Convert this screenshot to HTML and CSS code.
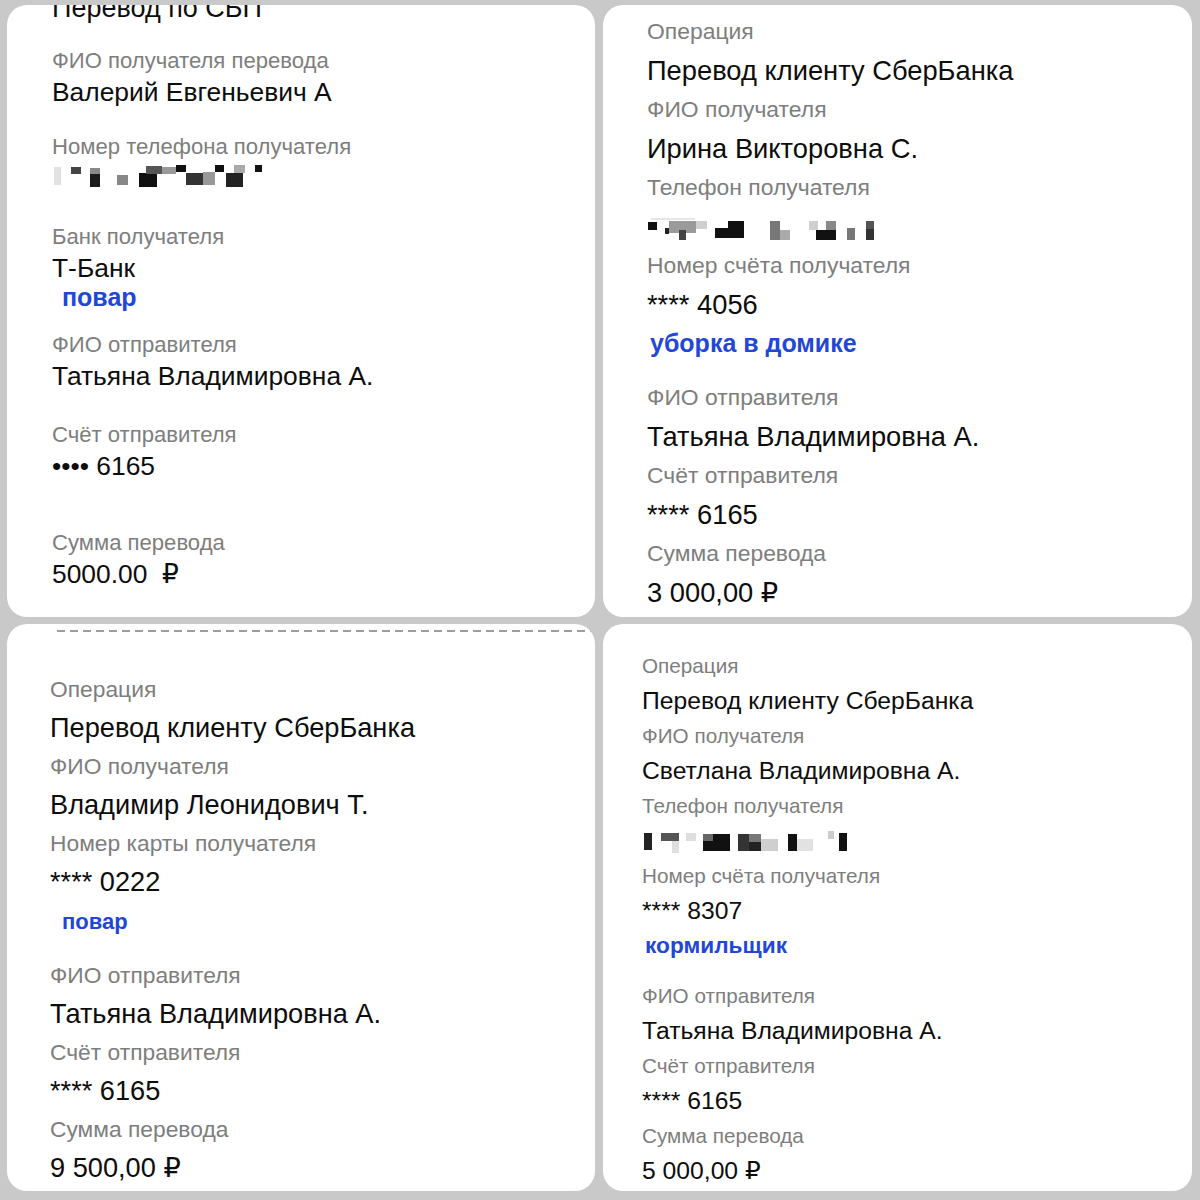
FILE: index.html
```html
<!DOCTYPE html>
<html lang="ru">
<head>
<meta charset="utf-8">
<title>Переводы</title>
<link rel="stylesheet" href="styles.css">
</head>
<body>
<div class="collage">

  <section class="card card-tl">
    <div class="val title">Перевод по СБП</div>
    <div class="lbl mt-22">ФИО получателя перевода</div>
    <div class="val">Валерий Евгеньевич А</div>
    <div class="lbl mt-24">Номер телефона получателя</div>
    <div class="phone phone-tl">
      <svg width="212" height="22" viewBox="0 0 212 22">
        <rect x="2" y="2" width="7" height="18" fill="#e2e2e2"/>
        <rect x="19" y="2" width="10" height="7" fill="#444"/>
        <rect x="38" y="3" width="10" height="6" fill="#888"/>
        <rect x="38" y="9" width="10" height="13" fill="#1a1a1a"/>
        <rect x="65" y="10" width="11" height="10" fill="#888"/>
        <rect x="87" y="8" width="18" height="14" fill="#111"/>
        <rect x="94" y="1" width="16" height="8" fill="#555"/>
        <rect x="110" y="2" width="14" height="7" fill="#999"/>
        <rect x="124" y="0" width="10" height="7" fill="#111"/>
        <rect x="134" y="8" width="17" height="12" fill="#333"/>
        <rect x="151" y="7" width="12" height="13" fill="#999"/>
        <rect x="163" y="0" width="9" height="7" fill="#111"/>
        <rect x="174" y="8" width="17" height="14" fill="#222"/>
        <rect x="182" y="0" width="11" height="8" fill="#aaa"/>
        <rect x="203" y="0" width="7" height="7" fill="#111"/>
      </svg>
    </div>
    <div class="lbl mt-34">Банк получателя</div>
    <div class="val">Т-Банк</div>
    <div class="note mt-n2">повар</div>
    <div class="lbl mt-18">ФИО отправителя</div>
    <div class="val">Татьяна Владимировна А.</div>
    <div class="lbl mt-28">Счёт отправителя</div>
    <div class="val">•••• 6165</div>
    <div class="lbl mt-46">Сумма перевода</div>
    <div class="val">5000.00&nbsp; ₽</div>
  </section>

  <section class="card card-tr">
    <div class="lbl">Операция</div>
    <div class="val">Перевод клиенту СберБанка</div>
    <div class="lbl">ФИО получателя</div>
    <div class="val">Ирина Викторовна С.</div>
    <div class="lbl">Телефон получателя</div>
    <div class="phone phone-tr">
      <svg width="232" height="24" viewBox="0 0 232 24">
        <rect x="4" y="0" width="44" height="2" fill="#e6e6e6"/>
        <rect x="1" y="4" width="9" height="8" fill="#111"/>
        <rect x="18" y="10" width="4" height="6" fill="#222"/>
        <rect x="22" y="3" width="27" height="12" fill="#9a9a9a"/>
        <rect x="32" y="12" width="7" height="10" fill="#444"/>
        <rect x="49" y="3" width="11" height="8" fill="#cfcfcf"/>
        <rect x="68" y="10" width="13" height="10" fill="#111"/>
        <rect x="81" y="3" width="16" height="17" fill="#111"/>
        <rect x="123" y="3" width="10" height="19" fill="#777"/>
        <rect x="133" y="12" width="10" height="10" fill="#aaa"/>
        <rect x="162" y="3" width="9" height="9" fill="#cfcfcf"/>
        <rect x="169" y="12" width="20" height="10" fill="#111"/>
        <rect x="179" y="3" width="10" height="9" fill="#888"/>
        <rect x="200" y="10" width="8" height="12" fill="#777"/>
        <rect x="219" y="3" width="8" height="8" fill="#555"/>
        <rect x="219" y="11" width="8" height="11" fill="#333"/>
      </svg>
    </div>
    <div class="lbl">Номер счёта получателя</div>
    <div class="val">**** 4056</div>
    <div class="note">уборка в домике</div>
    <div class="lbl mt-15">ФИО отправителя</div>
    <div class="val">Татьяна Владимировна А.</div>
    <div class="lbl">Счёт отправителя</div>
    <div class="val">**** 6165</div>
    <div class="lbl">Сумма перевода</div>
    <div class="val">3 000,00 ₽</div>
  </section>

  <section class="card card-bl">
    <div class="dash"></div>
    <div class="lbl mt-38">Операция</div>
    <div class="val">Перевод клиенту СберБанка</div>
    <div class="lbl">ФИО получателя</div>
    <div class="val">Владимир Леонидович Т.</div>
    <div class="lbl">Номер карты получателя</div>
    <div class="val">**** 0222</div>
    <div class="note mt-2">повар</div>
    <div class="lbl mt-14">ФИО отправителя</div>
    <div class="val">Татьяна Владимировна А.</div>
    <div class="lbl">Счёт отправителя</div>
    <div class="val">**** 6165</div>
    <div class="lbl">Сумма перевода</div>
    <div class="val">9 500,00 ₽</div>
  </section>

  <section class="card card-br">
    <div class="lbl">Операция</div>
    <div class="val">Перевод клиенту СберБанка</div>
    <div class="lbl">ФИО получателя</div>
    <div class="val">Светлана Владимировна А.</div>
    <div class="lbl">Телефон получателя</div>
    <div class="phone phone-br">
      <svg width="210" height="22" viewBox="0 0 210 22">
        <rect x="2" y="2" width="8" height="17" fill="#222"/>
        <rect x="19" y="2" width="18" height="8" fill="#555"/>
        <rect x="30" y="10" width="7" height="12" fill="#dedede"/>
        <rect x="44" y="2" width="10" height="8" fill="#dedede"/>
        <rect x="61" y="3" width="10" height="7" fill="#666"/>
        <rect x="61" y="10" width="27" height="10" fill="#111"/>
        <rect x="71" y="3" width="17" height="7" fill="#111"/>
        <rect x="96" y="3" width="11" height="17" fill="#333"/>
        <rect x="107" y="3" width="12" height="8" fill="#777"/>
        <rect x="107" y="11" width="12" height="9" fill="#222"/>
        <rect x="119" y="8" width="17" height="12" fill="#cfcfcf"/>
        <rect x="146" y="3" width="9" height="17" fill="#111"/>
        <rect x="155" y="8" width="16" height="12" fill="#e2e2e2"/>
        <rect x="186" y="0" width="6" height="8" fill="#ccc"/>
        <rect x="197" y="2" width="8" height="18" fill="#111"/>
      </svg>
    </div>
    <div class="lbl">Номер счёта получателя</div>
    <div class="val">**** 8307</div>
    <div class="note">кормильщик</div>
    <div class="lbl mt-14">ФИО отправителя</div>
    <div class="val">Татьяна Владимировна А.</div>
    <div class="lbl">Счёт отправителя</div>
    <div class="val">**** 6165</div>
    <div class="lbl">Сумма перевода</div>
    <div class="val">5 000,00 ₽</div>
  </section>

</div>
</body>
</html>
```

FILE: styles.css
```css
html, body {
  margin: 0;
  padding: 0;
}

body {
  background: #c9c9c9;
  font-family: "Liberation Sans", Arial, "DejaVu Sans", sans-serif;
  width: 1200px;
  height: 1200px;
  overflow: hidden;
}

.collage {
  display: grid;
  grid-template-columns: 588px 589px;
  grid-template-rows: 612px 567px;
  column-gap: 8px;
  row-gap: 7px;
  padding: 5px 0 0 7px;
}

.card {
  background: #ffffff;
  border-radius: 20px;
  overflow: hidden;
  display: flex;
  flex-direction: column;
  align-items: flex-start;
  box-sizing: border-box;
}

.lbl {
  color: #7e7e7e;
  white-space: nowrap;
  font-size: var(--lf);
  line-height: var(--llh);
}

.val {
  color: #0d0d0d;
  white-space: nowrap;
  font-size: var(--vf);
  line-height: var(--vlh);
}

.note {
  color: #2247d6;
  font-weight: 700;
  white-space: nowrap;
  font-size: var(--nf);
  line-height: var(--nlh);
  margin-left: var(--ni);
}

.phone {
  height: var(--ph);
  display: flex;
  align-items: flex-start;
}

.phone svg {
  display: block;
}

/* top-left card */
.card-tl {
  padding-left: 45px;
  --lf: 22.1px;
  --llh: 30px;
  --vf: 26.4px;
  --vlh: 32px;
  --nf: 25px;
  --nlh: 30px;
  --ni: 10px;
  --ph: 22px;
}

.card-tl .title {
  font-size: 27px;
  line-height: 32px;
  margin-top: -13px;
}

.phone-tl {
  margin-top: 3px;
}

/* top-right card */
.card-tr {
  padding-left: 44px;
  padding-top: 7px;
  --lf: 22.9px;
  --llh: 39px;
  --vf: 27.3px;
  --vlh: 39px;
  --nf: 25px;
  --nlh: 39px;
  --ni: 3px;
  --ph: 39px;
}

.phone-tr svg {
  margin-top: 11px;
}

/* bottom-left card */
.card-bl {
  padding-left: 43px;
  --lf: 22.8px;
  --llh: 38.5px;
  --vf: 27.2px;
  --vlh: 38.5px;
  --nf: 22px;
  --nlh: 38.5px;
  --ni: 12px;
}

.dash {
  align-self: stretch;
  height: 2px;
  margin-top: 6px;
  margin-left: 7px;
  background-image: repeating-linear-gradient(to right, #9d9d9d 0 8px, transparent 8px 13px);
}

/* bottom-right card */
.card-br {
  padding-left: 39px;
  padding-top: 24px;
  --lf: 20.7px;
  --llh: 35px;
  --vf: 24.7px;
  --vlh: 35px;
  --nf: 22.7px;
  --nlh: 35px;
  --ni: 3px;
  --ph: 35px;
}

.phone-br svg {
  margin-top: 8px;
}

/* spacing helpers */
.mt-n2 { margin-top: -2px; }
.mt-2 { margin-top: 2px; }
.mt-14 { margin-top: 14.5px; }
.mt-15 { margin-top: 15px; }
.mt-18 { margin-top: 18px; }
.mt-22 { margin-top: 22px; }
.mt-24 { margin-top: 24px; }
.mt-28 { margin-top: 28px; }
.mt-34 { margin-top: 34.5px; }
.mt-38 { margin-top: 38px; }
.mt-46 { margin-top: 46px; }
```
